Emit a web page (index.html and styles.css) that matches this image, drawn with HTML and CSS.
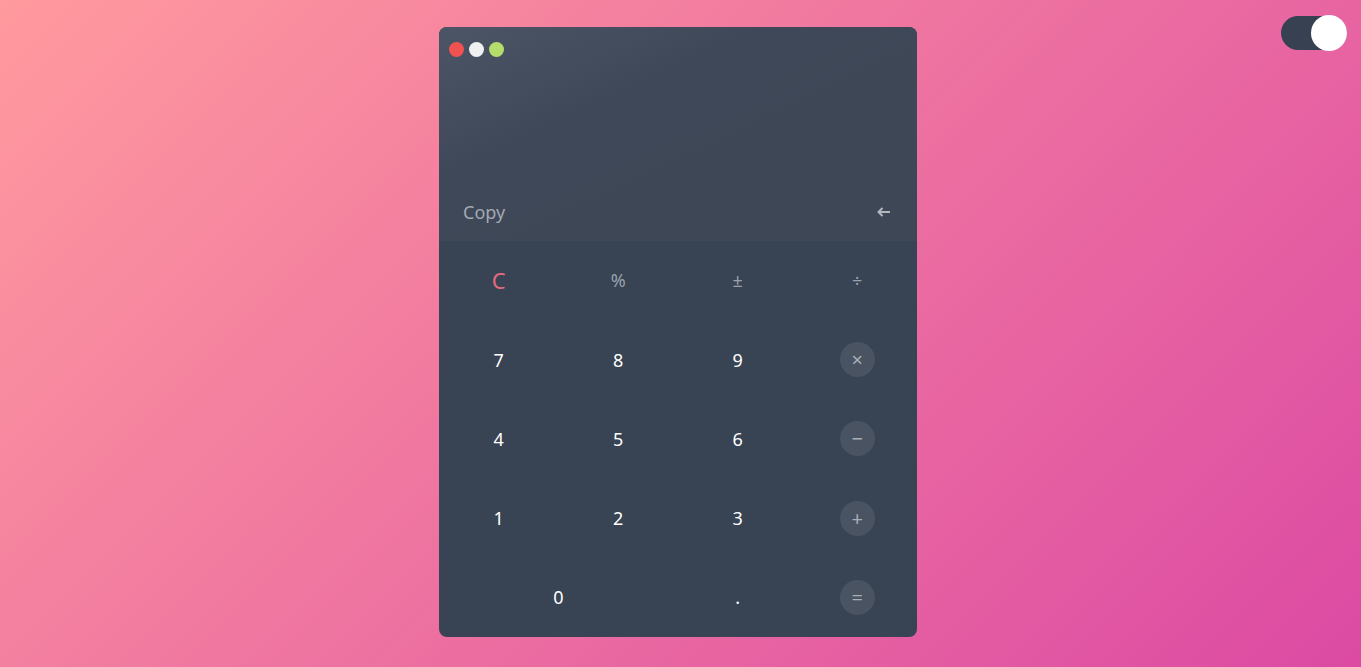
FILE: index.html
```html
<!DOCTYPE html>
<html lang="en">
<head>
<meta charset="utf-8">
<title>Calculator</title>
<link rel="stylesheet" href="styles.css">
</head>
<body>
<div class="page">
  <div class="toggle"><span class="knob"></span></div>
  <div class="calc">
    <div class="display">
      <div class="dots">
        <span class="dot red"></span>
        <span class="dot white"></span>
        <span class="dot green"></span>
      </div>
      <div class="actions">
        <span class="copy">Copy</span>
        <svg class="back" width="13" height="10" viewBox="0 0 13 10" aria-label="Backspace"><path d="M13 5H1.5M5.5 1L1.5 5L5.5 9" fill="none" stroke="#b3b8bf" stroke-width="2"/></svg>
      </div>
    </div>
    <div class="keys">
      <div class="key clear">C</div>
      <div class="key fn">%</div>
      <div class="key fn">&plusmn;</div>
      <div class="key fn">&divide;</div>
      <div class="key">7</div>
      <div class="key">8</div>
      <div class="key">9</div>
      <div class="key"><span class="op">&times;</span></div>
      <div class="key">4</div>
      <div class="key">5</div>
      <div class="key">6</div>
      <div class="key"><span class="op">&minus;</span></div>
      <div class="key">1</div>
      <div class="key">2</div>
      <div class="key">3</div>
      <div class="key"><span class="op">+</span></div>
      <div class="key zero">0</div>
      <div class="key">.</div>
      <div class="key"><span class="op">=</span></div>
    </div>
  </div>
</div>
</body>
</html>
```
FILE: styles.css
```css
* { box-sizing: border-box; }
html, body { margin: 0; height: 100%; }
body {
  font-family: "Noto Sans", "Open Sans", sans-serif;
  background: linear-gradient(135deg, #ff9a9e 0%, #dc4aa3 100%);
  overflow: hidden;
}
.page {
  position: relative;
  height: 667px;
  display: flex;
  justify-content: center;
  padding: 27px 5px 0 0;
}
.toggle {
  position: absolute;
  top: 16px;
  right: 14px;
  width: 66px;
  height: 34px;
  border-radius: 17px;
  background: #374151;
}
.knob {
  position: absolute;
  right: 0;
  top: -1px;
  width: 36px;
  height: 36px;
  border-radius: 50%;
  background: #fff;
}
.calc {
  width: 478px;
  height: 610px;
  border-radius: 8px;
  overflow: hidden;
  background: #384353;
  display: flex;
  flex-direction: column;
}
.display {
  height: 214px;
  background: linear-gradient(155deg, #4b5566 0%, #3f4858 35%, #3d4755 100%);
  display: flex;
  flex-direction: column;
  justify-content: space-between;
  padding: 15px 0 0 10px;
}
.dots { display: flex; gap: 5px; }
.dot { width: 15px; height: 15px; border-radius: 50%; }
.red { background: #f05252; }
.white { background: #f0f0f0; }
.green { background: #b5dd6b; }
.actions {
  display: flex;
  justify-content: space-between;
  align-items: center;
  padding: 0 27px 9px 14px;
  height: 50px;
}
.copy { color: #a3a9b2; font-size: 18px; }
.back { display: block; }
.keys {
  flex: 1;
  display: grid;
  grid-template-columns: repeat(4, 1fr);
  grid-template-rows: repeat(5, 1fr);
}
.key {
  display: flex;
  align-items: center;
  justify-content: center;
  color: #ffffff;
  font-size: 18px;
}
.clear { color: #e46a80; font-size: 22px; padding-bottom: 2px; }
.fn { color: #9aa1ab; font-size: 18px; padding-bottom: 2px; }
.zero { grid-column: span 2; }
.op {
  width: 35px;
  height: 35px;
  border-radius: 50%;
  background: #4a5361;
  color: #a8aeb7;
  font-size: 20px;
  display: flex;
  align-items: center;
  justify-content: center;
}
```
